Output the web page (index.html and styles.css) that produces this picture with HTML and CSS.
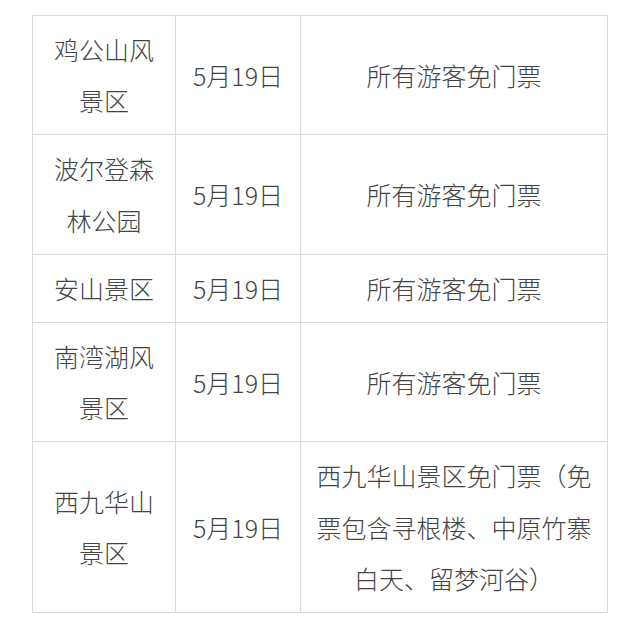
FILE: index.html
```html
<!DOCTYPE html>
<html lang="zh">
<head>
<meta charset="utf-8">
<link rel="stylesheet" href="styles.css">
</head>
<body>
<table class="tbl">
  <colgroup>
    <col class="c1">
    <col class="c2">
    <col class="c3">
  </colgroup>
  <tbody>
    <tr><td>鸡公山风景区</td><td>5月19日</td><td>所有游客免门票</td></tr>
    <tr><td>波尔登森林公园</td><td>5月19日</td><td>所有游客免门票</td></tr>
    <tr><td>安山景区</td><td>5月19日</td><td>所有游客免门票</td></tr>
    <tr><td>南湾湖风景区</td><td>5月19日</td><td>所有游客免门票</td></tr>
    <tr><td>西九华山景区</td><td>5月19日</td><td>西九华山景区免门票（免票包含寻根楼、中原竹寨白天、留梦河谷）</td></tr>
  </tbody>
</table>
</body>
</html>
```
FILE: styles.css
```css
html, body {
  margin: 0;
  padding: 0;
  background: #ffffff;
}
body {
  padding: 15px 0 0 32px;
  font-family: "Noto Sans CJK SC", "Noto Sans", sans-serif;
  color: #444444;
}
.tbl {
  border-collapse: collapse;
  table-layout: fixed;
  width: 575px;
}
.c1 { width: 143px; }
.c2 { width: 125px; }
.c3 { width: 307px; }
.tbl td {
  border: 1px solid #dadada;
  padding: 8px 10px;
  font-size: 25px;
  font-weight: 300;
  line-height: 51.2px;
  text-align: center;
  vertical-align: middle;
}
```
